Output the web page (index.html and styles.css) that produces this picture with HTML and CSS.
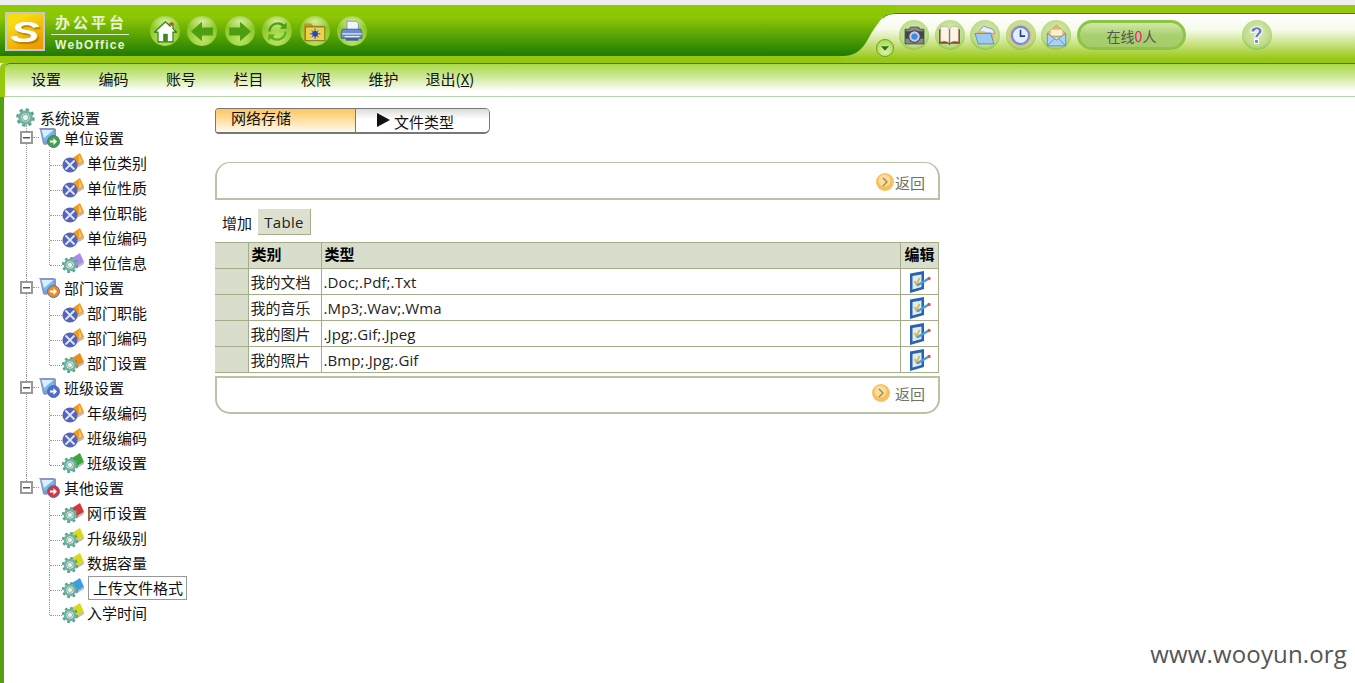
FILE: index.html
```html
<!DOCTYPE html>
<html lang="zh-CN">
<head>
<meta charset="utf-8">
<title>办公平台 WebOffice</title>
<link rel="stylesheet" href="styles.css">
</head>
<body>
<svg class="defs" width="0" height="0" aria-hidden="true">
  <defs>
    <linearGradient id="gPanel" gradientUnits="userSpaceOnUse" x1="0" y1="8" x2="0" y2="58">
      <stop offset="0" stop-color="#ffffff"/><stop offset=".32" stop-color="#f6fbea"/><stop offset=".92" stop-color="#98c814"/><stop offset="1" stop-color="#98c814"/>
    </linearGradient>
    <linearGradient id="gDark" gradientUnits="userSpaceOnUse" x1="0" y1="0" x2="0" y2="51">
      <stop offset="0" stop-color="#8fca04"/><stop offset=".25" stop-color="#8cc604"/><stop offset=".7" stop-color="#4a9a04"/><stop offset="1" stop-color="#1f7a02"/>
    </linearGradient>
    <symbol id="gear" viewBox="0 0 20 20">
      <circle cx="10" cy="10" r="8" fill="none" stroke="#5a9c8c" stroke-width="3.600" stroke-dasharray="3.200 3.080"/>
      <circle cx="10" cy="10" r="6" fill="none" stroke="#6fb4a0" stroke-width="3.400"/>
      <circle cx="10" cy="10" r="3.400" fill="#eef4f0" stroke="#58807a" stroke-width=".8"/>
    </symbol>
    <symbol id="net" viewBox="0 0 22 20">
      <path d="M9 6 18 0l4 9-9 5z" fill="#f29a1c"/>
      <path d="M17 1.500l3 7-3 2z" fill="#f8c878"/>
      <path d="M12 14l10-5v2l-9 5z" fill="#b8bcc8"/>
      <circle cx="8" cy="12" r="7.600" fill="#5664b8"/>
      <path d="M3.500 7.500l9 9M12.500 7.500l-9 9" stroke="#dfe6f6" stroke-width="1.800"/>
    </symbol>
    <symbol id="gearflag" viewBox="0 0 22 20">
      <path d="M10 5 18 0l4 9-8 5z" fill="var(--flag)"/>
      <path d="M13 14l9-5v2l-8 5z" fill="#b8bcc8"/>
      <circle cx="8" cy="12" r="6.600" fill="none" stroke="#5a9c8c" stroke-width="3" stroke-dasharray="2.600 2.580"/>
      <circle cx="8" cy="12" r="4.900" fill="none" stroke="#6fb4a0" stroke-width="2.800"/>
      <circle cx="8" cy="12" r="2.600" fill="#eef4f0" stroke="#58807a" stroke-width=".6"/>
    </symbol>
    <symbol id="mon" viewBox="0 0 21 21">
      <path d="M0 1h15l2 1v10l-1 3-10 3-2-1-3-14z" fill="#8c96c4"/>
      <path d="M2.500 3h12v8.500l-9.500 2.500z" fill="#6cbcf0"/>
      <path d="M2.500 3h12L5 11z" fill="#d8eefc"/>
      <circle cx="14.500" cy="14.500" r="6" fill="var(--flag)" stroke="#5c6a9c" stroke-width="1"/>
      <path d="M11 13.500h3.500v-2.500l3.500 3.500-3.500 3.500v-2.500H11z" fill="#fff"/>
    </symbol>
    <symbol id="edit" viewBox="0 0 22 22">
      <path d="M1 2.500 15 0v18L1 22z" fill="#2b62ae"/>
      <path d="M3.500 5l9-1.500v12.500l-9 2.500z" fill="#dcecf8"/>
      <path d="M5.500 10l2 3.500 3-6.500" fill="none" stroke="#e0b838" stroke-width="1.800"/>
      <path d="M8 14.500l11-6.500" stroke="#4a9ce0" stroke-width="2.400"/>
      <circle cx="20" cy="7.500" r="1.700" fill="#c85c4c"/>
    </symbol>
    <symbol id="chev" viewBox="0 0 18 18">
      <circle cx="9" cy="9" r="9" fill="#f6c060"/>
      <circle cx="8.500" cy="7.500" r="6" fill="#fcdc98"/>
      <path d="M7 5l4 4-4 4" fill="none" stroke="#8c8c60" stroke-width="1.300"/>
    </symbol>
  </defs>
</svg>

<div class="topstrip"></div>

<header class="header">
  <div class="hdr-left">
    <div class="logo"><span class="logo-s">S</span></div>
    <div class="brand">
      <div class="brand-cn">办公平台</div>
      <div class="brand-en">WebOffice</div>
    </div>
    <div class="tools">
      <span class="orb"><svg viewBox="0 0 20 20"><path d="M10 1.500 .5 10.500H3.500V19h13V10.500h3l-3-2.800V3h-2.500v2.300z" fill="#fff" stroke="#2c7c14" stroke-width="1"/><rect x="8" y="12" width="4" height="7" fill="#3c8a1c"/><rect x="14.500" y="2" width="2" height="3" fill="#d05020"/></svg></span>
      <span class="orb"><svg viewBox="0 0 20 20"><path d="M0 10 9.500 1.500v5H19v7H9.500v5z" fill="#4f9e12"/></svg></span>
      <span class="orb"><svg viewBox="0 0 20 20"><path d="M20 10 10.500 1.500v5H1v7h9.500v5z" fill="#4f9e12"/></svg></span>
      <span class="orb"><svg viewBox="0 0 20 20"><path d="M4 10a6 6 0 0 1 10-4.500L12 7.500h6V2l-2 2A8.500 8.500 0 0 0 2 10z" fill="#4f9e12"/><path d="M16 10a6 6 0 0 1-10 4.500l2-2H2V18l2-2a8.500 8.500 0 0 0 14-6z" fill="#5fae1c"/></svg></span>
      <span class="orb"><svg viewBox="0 0 20 20"><path d="M1 3h6l2 2h9v13H1z" fill="#b89c24"/><rect x="2" y="6" width="17" height="12" fill="#e8d44c" stroke="#7c6c18" stroke-width=".8"/><circle cx="10.500" cy="12" r="2.500" fill="#2c44c8"/><path d="M10.500 7.500v9M6 12h9M7.500 9l6 6M13.500 9l-6 6" stroke="#2c44c8" stroke-width=".8"/></svg></span>
      <span class="orb"><svg viewBox="0 0 20 20"><path d="M6 1h8l2 2v6H6z" fill="#f2f4fa" stroke="#7c8cc0" stroke-width=".8"/><path d="M2 8h16l1 3v5H1v-5z" fill="#6e8ccc" stroke="#44609c" stroke-width=".8"/><path d="M2 12h17M4 14.500h13" stroke="#dfe8f8" stroke-width="1"/><rect x="5" y="16" width="11" height="2" fill="#44609c"/></svg></span>
    </div>
  </div>
  <svg class="curve" viewBox="0 0 55 58" aria-hidden="true">
    <rect width="55" height="51" fill="url(#gDark)"/>
    <rect y="51" width="55" height="7" fill="#98c80e"/>
    <path d="M55 8C44 8 40 14 33 24 26 34 22 51 2 51H0V58H55z" fill="url(#gPanel)"/>
    <path d="M55 8.500C49 8.500 45 10 42 13" fill="none" stroke="#3a9414" stroke-width="1"/>
  </svg>
  <span class="drop"><svg viewBox="0 0 18 18"><path d="M4.500 7h9L9 12z" fill="#1e7a10"/></svg></span>
  <div class="hdr-right">
    <span class="orb orb-r"><svg viewBox="0 0 22 20"><path d="M7 2h8l1 2h4v14H2V4h4z" fill="#8a8a8a" stroke="#3c3c3c" stroke-width=".8"/><rect x="2" y="6" width="18" height="7" fill="#44444c"/><circle cx="11" cy="11" r="5.500" fill="#c8ccd4" stroke="#444" stroke-width="1"/><circle cx="11" cy="11" r="3" fill="#3c88e8"/></svg></span>
    <span class="orb orb-r"><svg viewBox="0 0 22 20"><path d="M1 4v14h9l1 1.500 1-1.500h9V4z" fill="#8c4a20"/><path d="M2.500 2c3-1 6-1 8 1v14c-2-1.500-5-2-8-1z" fill="#fbf4e6" stroke="#a8a090" stroke-width=".5"/><path d="M19.500 2c-3-1-6-1-8 1v14c2-1.500 5-2 8-1z" fill="#fbf4e6" stroke="#a8a090" stroke-width=".5"/></svg></span>
    <span class="orb orb-r"><svg viewBox="0 0 22 20"><path d="M4 7 9 1l9 3 2 4z" fill="#e8eef8" stroke="#6c8cc0" stroke-width=".8"/><path d="M3 6h7l2 2h8l-2 10H4z" fill="#f0b850"/><path d="M1 8h15l3 10H4z" fill="#9ccbf2" stroke="#4c88cc" stroke-width=".8"/></svg></span>
    <span class="orb orb-r"><svg viewBox="0 0 20 20"><circle cx="10" cy="10" r="9" fill="#6c90d8" stroke="#e8b880" stroke-width="1.200"/><circle cx="10" cy="10" r="6.500" fill="#e4eefa"/><path d="M10 5v5.500h4" fill="none" stroke="#27408c" stroke-width="1.400"/></svg></span>
    <span class="orb orb-r"><svg viewBox="0 0 20 20"><path d="M2 8 10 1l8 7v3H2z" fill="#f2b85c" stroke="#b88c44" stroke-width=".6"/><rect x="5" y="5" width="10" height="5" fill="#faf0d8"/><path d="M2 8l8 6 8-6v11H2z" fill="#a8d4f4" stroke="#5c8cd0" stroke-width=".8"/><path d="M2 19l6-6M18 19l-6-6" stroke="#5c8cd0" stroke-width=".8"/></svg></span>
    <span class="online">在线<em class="online-n">0</em>人</span>
    <span class="orb orb-r orb-help"><svg viewBox="0 0 20 20"><path d="M5 7c0-6 10-6 10-1 0 3-3 3-3.500 6h-3c0-4 3-4 3-6 0-1.500-3-1.500-3 1z" fill="#6c78c8" stroke="#fff" stroke-width="1"/><rect x="8.300" y="13.500" width="3.400" height="3.400" fill="#6c78c8" stroke="#fff" stroke-width="1"/></svg></span>
  </div>
</header>

<nav class="nav">
  <a class="nav-item">设置</a>
  <a class="nav-item">编码</a>
  <a class="nav-item">账号</a>
  <a class="nav-item">栏目</a>
  <a class="nav-item">权限</a>
  <a class="nav-item">维护</a>
  <a class="nav-item nav-exit">退出(<u>X</u>)</a>
</nav>

<main class="main">
  <aside class="sidebar">
    <div class="root"><svg class="ic-root"><use href="#gear"/></svg><span>系统设置</span></div>

    <div class="group">
      <div class="g-row"><span class="box"></span><span class="dash d-g"></span><svg class="ic-mon c-green"><use href="#mon"/></svg><span>单位设置</span></div>
      <div class="kids">
        <div class="kid"><span class="dash"></span><svg class="ic"><use href="#net"/></svg><span>单位类别</span></div>
        <div class="kid"><span class="dash"></span><svg class="ic"><use href="#net"/></svg><span>单位性质</span></div>
        <div class="kid"><span class="dash"></span><svg class="ic"><use href="#net"/></svg><span>单位职能</span></div>
        <div class="kid"><span class="dash"></span><svg class="ic"><use href="#net"/></svg><span>单位编码</span></div>
        <div class="kid"><span class="dash"></span><svg class="ic c-purple"><use href="#gearflag"/></svg><span>单位信息</span></div>
      </div>
    </div>

    <div class="group">
      <div class="g-row"><span class="box"></span><span class="dash d-g"></span><svg class="ic-mon c-orange"><use href="#mon"/></svg><span>部门设置</span></div>
      <div class="kids">
        <div class="kid"><span class="dash"></span><svg class="ic"><use href="#net"/></svg><span>部门职能</span></div>
        <div class="kid"><span class="dash"></span><svg class="ic"><use href="#net"/></svg><span>部门编码</span></div>
        <div class="kid"><span class="dash"></span><svg class="ic c-orange"><use href="#gearflag"/></svg><span>部门设置</span></div>
      </div>
    </div>

    <div class="group">
      <div class="g-row"><span class="box"></span><span class="dash d-g"></span><svg class="ic-mon c-blue"><use href="#mon"/></svg><span>班级设置</span></div>
      <div class="kids">
        <div class="kid"><span class="dash"></span><svg class="ic"><use href="#net"/></svg><span>年级编码</span></div>
        <div class="kid"><span class="dash"></span><svg class="ic"><use href="#net"/></svg><span>班级编码</span></div>
        <div class="kid"><span class="dash"></span><svg class="ic c-green"><use href="#gearflag"/></svg><span>班级设置</span></div>
      </div>
    </div>

    <div class="group group-last">
      <div class="g-row"><span class="box"></span><span class="dash d-g"></span><svg class="ic-mon c-red"><use href="#mon"/></svg><span>其他设置</span></div>
      <div class="kids">
        <div class="kid"><span class="dash"></span><svg class="ic c-red"><use href="#gearflag"/></svg><span>网币设置</span></div>
        <div class="kid"><span class="dash"></span><svg class="ic c-yellow"><use href="#gearflag"/></svg><span>升级级别</span></div>
        <div class="kid"><span class="dash"></span><svg class="ic c-yellow"><use href="#gearflag"/></svg><span>数据容量</span></div>
        <div class="kid"><span class="dash"></span><svg class="ic c-sky"><use href="#gearflag"/></svg><span class="selected">上传文件格式</span></div>
        <div class="kid"><span class="dash"></span><svg class="ic c-yellow"><use href="#gearflag"/></svg><span>入学时间</span></div>
      </div>
    </div>
  </aside>

  <section class="content">
    <div class="tabs">
      <div class="tab tab-on">网络存储</div>
      <div class="tab tab-off"><span class="tri"></span>文件类型</div>
    </div>

    <div class="panel panel-top">
      <a class="back"><svg class="ic-back"><use href="#chev"/></svg>返回</a>
    </div>

    <div class="toolrow">
      <span class="add">增加</span>
      <span class="tbl-btn">Table</span>
    </div>

    <table class="grid">
      <colgroup><col class="c1"><col class="c2"><col class="c3"><col class="c4"></colgroup>
      <thead>
        <tr><th class="shade"></th><th>类别</th><th>类型</th><th class="th-edit">编辑</th></tr>
      </thead>
      <tbody>
        <tr><td class="shade"></td><td>我的文档</td><td>.Doc;.Pdf;.Txt</td><td class="td-edit"><svg class="ic-edit"><use href="#edit"/></svg></td></tr>
        <tr><td class="shade"></td><td>我的音乐</td><td>.Mp3;.Wav;.Wma</td><td class="td-edit"><svg class="ic-edit"><use href="#edit"/></svg></td></tr>
        <tr><td class="shade"></td><td>我的图片</td><td>.Jpg;.Gif;.Jpeg</td><td class="td-edit"><svg class="ic-edit"><use href="#edit"/></svg></td></tr>
        <tr><td class="shade"></td><td>我的照片</td><td>.Bmp;.Jpg;.Gif</td><td class="td-edit"><svg class="ic-edit"><use href="#edit"/></svg></td></tr>
      </tbody>
    </table>

    <div class="panel panel-bottom">
      <a class="back back-gap"><svg class="ic-back"><use href="#chev"/></svg>返回</a>
    </div>
  </section>
</main>

<div class="watermark">www.wooyun.org</div>
</body>
</html>
```

FILE: styles.css
```css
* { box-sizing: border-box; }
html, body { margin: 0; height: 100%; overflow: hidden; background: #fff; }
body {
  font-family: "Noto Sans CJK SC", "Open Sans", sans-serif;
  font-size: 15px;
  color: #111;
  position: relative;
}
a { color: inherit; text-decoration: none; }
.defs { position: absolute; }

.topstrip { height: 5px; background: #eeeeee; }

/* Header */
.header {
  height: 58px;
  display: flex;
  background: #98c80e;
  position: relative;
}
.hdr-left {
  flex: 1;
  height: 51px;
  display: flex;
  align-items: flex-start;
  background: linear-gradient(#8fca04 0, #8cc604 25%, #4a9a04 70%, #1f7a02 100%);
}
.logo {
  width: 40px;
  height: 39px;
  margin: 7px 0 0 5px;
  border: 2px solid #c4c8d0;
  background: linear-gradient(150deg, #f8dc10 20%, #ec9c00 90%);
  display: flex;
  align-items: center;
  justify-content: center;
}
.logo-s {
  font: italic bold 30px/1 "Liberation Sans", sans-serif;
  color: #fff;
  text-shadow: 1px 2px 1px rgba(140, 90, 0, .55);
  transform: scaleX(1.45);
}
.brand { width: 78px; margin: 8px 0 0 6px; color: #e9f2d8; }
.brand-cn {
  height: 22px;
  border-bottom: 1px solid #e0ecc8;
  padding-left: 4px;
  font-size: 15px;
  font-weight: 700;
  line-height: 18px;
  letter-spacing: 3px;
  white-space: nowrap;
}
.brand-en {
  padding-left: 4px;
  margin-top: 3px;
  font: bold 12px/14px "Liberation Sans", sans-serif;
  letter-spacing: 1.3px;
}
.tools { display: flex; gap: 7.4px; margin: 11px 0 0 21px; }
.orb {
  width: 30px;
  height: 30px;
  border-radius: 50%;
  display: flex;
  align-items: center;
  justify-content: center;
  background:
    radial-gradient(ellipse 55% 32% at 50% 18%, rgba(225,245,170,.85), transparent 100%),
    radial-gradient(circle at 50% 78%, #bce668 0, #8fca2c 58%, #79b812 100%);
}
.orb svg { width: 23px; height: 23px; }

.curve { width: 55px; height: 58px; flex: none; display: block; }
.drop {
  position: absolute;
  left: 876px;
  top: 34px;
  width: 18px;
  height: 18px;
  border-radius: 50%;
  border: 1px solid #5ea81c;
  background: radial-gradient(circle at 50% 70%, #dff0a8, #a4d044);
}
.drop svg { display: block; width: 100%; height: 100%; }
.hdr-right {
  width: 459px;
  height: 50px;
  margin-top: 8px;
  padding: 6px 0 0 3px;
  border-top: 1px solid #2a8a10;
  display: flex;
  align-items: flex-start;
  gap: 5.5px;
  background: linear-gradient(#ffffff 0, #f6fbea 32%, #98c814 92%);
}
.orb-r {
  background:
    radial-gradient(circle at 50% 42%, #dcecb8 0, #bcdc88 60%, #8cc444 76%, #88c040 100%);
}
.online {
  width: 109px;
  height: 30px;
  border-radius: 15px;
  border: 3px solid #8cc444;
  margin-left: .5px;
  background: linear-gradient(#d4e8a8 0, #a8d070 50%, #a4cc68 100%);
  text-align: center;
  color: #555;
  font-size: 14px;
  line-height: 26px;
}
.online-n { font-style: normal; color: #f0108c; }
.orb-help { margin-left: 50px; }

/* Nav */
.nav {
  height: 34px;
  margin-left: 5px;
  padding: 0 0 3px 26px;
  display: flex;
  align-items: center;
  gap: 37.5px;
  border-top: 1px solid #2a8a10;
  border-top-left-radius: 5px;
  border-bottom: 1px solid #b6d6ac;
  background: linear-gradient(#a9d94a 0, #c8e68c 35%, #ffffff 85%);
  box-shadow: -5px 0 0 #98c80e;
  font-size: 15px;
  color: #111;
}
.nav-item { white-space: nowrap; }
.nav-exit { margin-left: -10.5px; }

/* Main */
.main { display: flex; height: 586px; }
.sidebar {
  width: 215px;
  flex: none;
  padding: 11px 0 0 12px;
  border-left: 4px solid #55a00e;
  line-height: 1;
}
.root { height: 18px; margin-bottom: -1px; display: flex; align-items: center; gap: 5px; }
.ic-root { width: 19px; height: 19px; flex: none; }

.group { margin-left: 10px; border-left: 1px dotted #999; position: relative; }
.group-last { border-left-color: transparent; }
.group-last::before {
  content: "";
  position: absolute;
  left: -1px;
  top: 0;
  height: 12px;
  border-left: 1px dotted #999;
}
.g-row {
  height: 25px;
  margin-left: -7px;
  display: flex;
  align-items: center;
  position: relative;
}
.box {
  width: 13px;
  height: 13px;
  flex: none;
  background: #fff linear-gradient(#555, #555) center / 7px 1.500px no-repeat;
  border: 2px solid #999;
}
.dash { border-top: 1px dotted #999; flex: none; }
.d-g { width: 6px; }
.ic-mon { width: 21px; height: 21px; margin-right: 4px; flex: none; }
.c-green { --flag: #3ca83c; }
.c-orange { --flag: #f08a1c; }
.c-blue { --flag: #4a70d0; }
.c-red { --flag: #d8343c; }
.c-purple { --flag: #a88ce8; }
.c-yellow { --flag: #d8d81c; }
.c-sky { --flag: #38a0e0; }

.kids { margin-left: 22px; }
.kid {
  height: 25px;
  display: flex;
  align-items: center;
  border-left: 1px dotted #999;
  position: relative;
}
.kid:last-child { border-left-color: transparent; }
.kid:last-child::before {
  content: "";
  position: absolute;
  left: -1px;
  top: 0;
  height: 15px;
  border-left: 1px dotted #999;
}
.kid .dash { width: 12px; margin-top: 5px; }
.ic { width: 22px; height: 20px; margin-right: 3px; flex: none; }
.selected {
  margin-left: 1px;
  padding: 0 3px 0 4px;
  height: 24px;
  line-height: 22px;
  border: 1px solid #999;
  white-space: nowrap;
}

/* Content */
.content { width: 725px; flex: none; padding-top: 11px; }
.tabs {
  width: 275px;
  height: 26px;
  display: flex;
  border: 1px solid #777;
  border-bottom-width: 2px;
  border-radius: 4px 5px 6px 4px;
  overflow: hidden;
}
.tab { height: 100%; white-space: nowrap; }
.tab-on {
  width: 140px;
  padding-left: 15px;
  line-height: 18px;
  background: linear-gradient(#ffc65c, #fffaf0);
  border-right: 1px solid #777;
}
.tab-off {
  flex: 1;
  display: flex;
  align-items: center;
  padding: 2px 0 0 21px;
  background: linear-gradient(#dcdcdc, #ffffff 45%);
}
.tri {
  width: 0;
  height: 0;
  margin: -4px 4px 0 0;
  border-left: 13px solid #111;
  border-top: 7px solid transparent;
  border-bottom: 7px solid transparent;
}
.panel {
  height: 38px;
  border: 2px solid #bac2a4;
  border-top-width: 1px;
  display: flex;
  justify-content: flex-end;
  padding-right: 13px;
  color: #6d7560;
}
.panel-top {
  margin-top: 28px;
  padding-top: 8px;
  border-radius: 15px 15px 0 0;
}
.panel-bottom {
  margin-top: 3px;
  padding-top: 4px;
  border-top-width: 2px;
  border-radius: 0 0 15px 15px;
}
.back { display: flex; align-items: center; height: 22px; }
.ic-back { width: 18px; height: 18px; margin-right: 1px; }
.back-gap .ic-back { margin-right: 5px; }

.toolrow {
  height: 26px;
  margin-top: 9px;
  display: flex;
  align-items: center;
  padding-left: 7px;
  gap: 6px;
}
.tbl-btn {
  width: 53px;
  height: 26px;
  line-height: 26px;
  text-align: center;
  background: #dde0cf;
  border-right: 1px solid #a3ad87;
  border-bottom: 1px solid #a3ad87;
  font-family: "Open Sans", sans-serif;
  letter-spacing: .3px;
  color: #222;
}

.grid {
  width: 724px;
  margin-top: 7px;
  border-collapse: collapse;
  table-layout: fixed;
  border: 1px solid #a3ad87;
  border-left: 0;
  font-size: 15px;
}
.c1 { width: 33px; }
.c2 { width: 73px; }
.c4 { width: 38px; }
.grid tr { height: 26px; }
.grid th, .grid td {
  padding: 0 2px;
  border: 1px solid #a3ad87;
  text-align: left;
  white-space: nowrap;
  line-height: 20px;
  font-family: "Open Sans", "Noto Sans CJK SC", sans-serif;
  letter-spacing: .1px;
  color: #222;
}
.grid td:nth-child(2) { letter-spacing: 0; }
.grid th {
  padding-bottom: 3px;
  padding-left: 3px;
  background: #d9ddcc;
  font-weight: 700;
  color: #000;
  letter-spacing: 0;
  font-family: "Noto Sans CJK SC", sans-serif;
  border-top: 0;
}
.grid .shade { background: #d9ddcc; border-left: 0; }
.grid .td-edit, .grid .th-edit { text-align: center; padding-left: 0; padding-right: 0; }
.ic-edit { width: 22px; height: 22px; display: block; margin: 0 auto; }

.watermark {
  position: absolute;
  right: 8px;
  bottom: 13px;
  font-family: "Open Sans", sans-serif;
  font-size: 24px;
  line-height: 32px;
  letter-spacing: .15px;
  color: #555;
}
```
